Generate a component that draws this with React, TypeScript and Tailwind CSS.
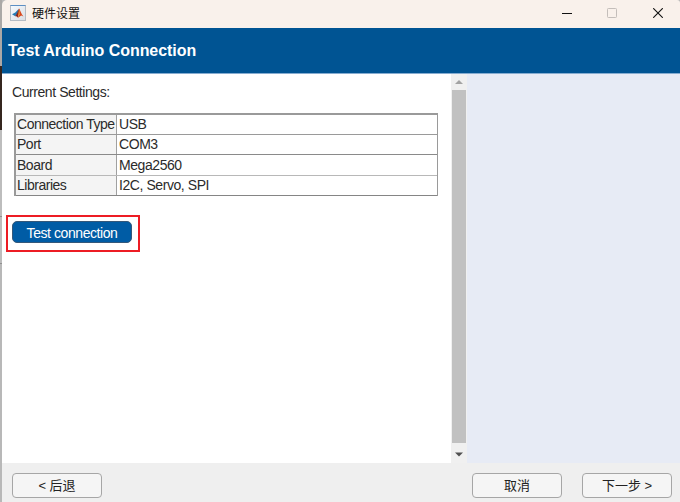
import type { ReactNode } from 'react';

const settings = [
  { label: 'Connection Type', value: 'USB', row: 'h-[19px] leading-[19px]', line: 'border-[#9a9a9a]' },
  { label: 'Port', value: 'COM3', row: 'h-[19px] leading-[19px]', line: 'border-[#8a8a8a]' },
  { label: 'Board', value: 'Mega2560', row: 'h-[20px] leading-[21px]', line: 'border-[#b8b8b8]' },
  { label: 'Libraries', value: 'I2C, Servo, SPI', row: 'h-[19px] leading-[19px]', line: 'border-[#858585]' },
];

function MatlabIcon() {
  return (
    <svg width="16" height="16" viewBox="0 0 16 16" className="ml-2">
      <defs>
        <linearGradient id="tile" x1="0" y1="0" x2="1" y2="1">
          <stop offset="0" stopColor="#f6faff" />
          <stop offset="1" stopColor="#d9dde2" />
        </linearGradient>
      </defs>
      <rect x="0.5" y="0.5" width="15" height="15" fill="url(#tile)" stroke="#b5bbc3" />
      <path d="M0.5 0.5h15" stroke="#5c8fc4" />
      <path d="M2 9.2L5.3 7.5L8.6 4L7.6 8.5L5.2 11.2Z" fill="#277bb5" />
      <path d="M5.2 11.2L7.2 8L9 3.5L10 8L7.4 12.5L6.5 11.2Z" fill="#8c241c" />
      <path d="M9 3.5C10.4 4.8 11 8.8 13.4 11.4L11.2 10.5L7.7 13L9 9Z" fill="#d9481c" />
      <path d="M9.2 4L9.7 9.4L8 11.9L8.6 7Z" fill="#f4a23b" />
    </svg>
  );
}

function TitleBar() {
  return (
    <div className="flex h-7 shrink-0 items-center rounded-tl-[5px] rounded-tr-[3px] bg-[#f9f1eb] pb-[2px]">
      <MatlabIcon />
      <span className="ml-[6px] font-['Noto_Sans_CJK_SC',sans-serif] text-[12px] leading-4 text-[#111]">硬件设置</span>
      <div className="ml-auto mr-[17px] flex items-center">
        <svg width="10" height="10" viewBox="0 0 10 10" className="mr-[35px]">
          <path d="M0 5.5h10" stroke="#111" />
        </svg>
        <svg width="10" height="10" viewBox="0 0 10 10" className="mr-9">
          <rect x="0.5" y="0.5" width="9" height="9" rx="0.8" fill="none" stroke="#c4beba" />
        </svg>
        <svg width="10" height="10" viewBox="0 0 10 10">
          <path d="M0.2 0.2l9.6 9.6M9.8 0.2l-9.6 9.6" stroke="#111" strokeWidth="1.1" />
        </svg>
      </div>
    </div>
  );
}

function SettingsTable() {
  return (
    <div className="ml-3 mt-3 w-[424px] border-r border-t-2 border-l-2 border-[#9a9a9a]">
      {settings.map(({ label, value, row, line }) => (
        <div key={label} className={`box-content flex border-b ${row} ${line}`}>
          <div className="w-[101px] shrink-0 whitespace-nowrap border-r border-[#a0a0a0] bg-[#f4f4f4] pl-px tracking-[-0.48px]">
            {label}
          </div>
          <div className="flex-1 pl-[2px]">{value}</div>
        </div>
      ))}
    </div>
  );
}

function ScrollBar() {
  return (
    <div className="flex w-4 flex-col items-center justify-between bg-[#f0f0f0]">
      <svg width="16" height="16" viewBox="0 0 16 16">
        <path d="M4 10L8 6L12 10Z" fill="#a3a3a3" />
      </svg>
      <div className="w-[14px] flex-1 bg-[#c1c1c1]" />
      <svg width="16" height="20" viewBox="0 0 16 20">
        <path d="M4 9.5H12L8 13.5Z" fill="#505050" />
      </svg>
    </div>
  );
}

function FooterButton({ children }: { children: ReactNode }) {
  return (
    <button className="h-[25px] w-[90px] rounded-[4px] border border-[#a6a6a6] bg-[#f5f5f5] font-['Liberation_Sans','Noto_Sans_CJK_SC',sans-serif] text-[13px] leading-5 text-[#222]">
      {children}
    </button>
  );
}

export default function App() {
  return (
    <div className="flex h-[502px] w-[680px] bg-[#b8b8b8] font-['Liberation_Sans',Arial,sans-serif]">
      <div className="flex w-[2px] shrink-0 flex-col">
        <div className="h-[66px] bg-[#aaa8a6]" />
        <div className="h-[64px] bg-[#35261f]" />
        <div className="h-[87px] border-b border-[#909090] bg-[#bdbdbd]" />
        <div className="h-[47px] border-b border-[#909090] bg-[#bdbdbd]" />
      </div>
      <div className="flex min-w-0 flex-1 flex-col">
        <TitleBar />
        <div className="flex h-[46px] shrink-0 items-center border-b border-[#86acd0] bg-[#005493] pl-[6px]">
          <h1 className="pt-px text-[16px] font-bold leading-5 tracking-[-0.05px] text-white">Test Arduino Connection</h1>
        </div>
        <div className="flex h-[389px] shrink-0 bg-white">
          <main className="w-[449px] text-[14px] tracking-[-0.43px] text-[#2b2b2b]">
            <p className="ml-[10px] mt-[9px] leading-[18px]">Current Settings:</p>
            <SettingsTable />
            <div className="ml-1 mt-[19px] flex h-[37px] w-[134px] border-2 border-[#ed1c24] pl-1 pt-1">
              <button className="h-[22px] w-[120px] rounded-[5px] border border-[#34587a] bg-[#005ca5] pt-px leading-[21px] tracking-[-0.43px] text-white">
                Test connection
              </button>
            </div>
          </main>
          <ScrollBar />
          <aside className="flex-1 bg-[#e7ebf5]" />
        </div>
        <footer className="flex flex-1 items-start bg-[#efefef] pl-[10px] pr-2 pt-[10px]">
          <FooterButton>&lt; 后退</FooterButton>
          <div className="ml-auto flex gap-5">
            <FooterButton>取消</FooterButton>
            <FooterButton>下一步 &gt;</FooterButton>
          </div>
        </footer>
      </div>
    </div>
  );
}
